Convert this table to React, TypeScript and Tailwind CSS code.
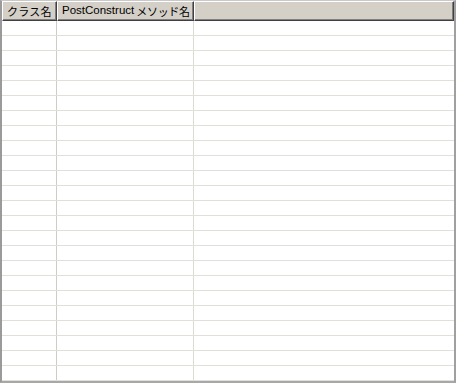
import React from "react";

const rows = Array.from({ length: 24 });

function HeaderCell({ w, children }: { w?: string; children?: React.ReactNode }) {
  return (
    <div
      className={`${w ?? "flex-1"} h-full shrink-0 border-t border-l border-t-white border-l-white border-r border-b border-r-[#404040] border-b-[#404040] shadow-[inset_-1px_-1px_0_#808080] flex items-center pl-[4px] overflow-hidden whitespace-nowrap`}
    >
      {children}
    </div>
  );
}

export default function App() {
  return (
    <div className="w-[456px] h-[385px] bg-white overflow-hidden">
      <div
        className="w-[456px] h-[383px] border-l-2 border-t border-r-2 border-b-2 border-l-[#9a9a9a] border-t-[#c8c8c8] border-r-[#a0a0a0] border-b-[#a8a8a8] flex flex-col overflow-hidden"
        style={{ fontFamily: '"Noto Sans CJK JP", "Liberation Sans", sans-serif' }}
      >
        <div className="flex h-[20px] shrink-0 bg-[#d4d0c8] leading-none text-black">
          <HeaderCell w="w-[55px]">
            <span className="text-[11px] tracking-[0.2px]">クラス名</span>
          </HeaderCell>
          <HeaderCell w="w-[137px]">
            <span className="text-[11.5px]" style={{ fontFamily: '"Liberation Sans", sans-serif' }}>PostConstruct</span>
            <span className="text-[11px] ml-[2px] tracking-[-0.3px]">メソッド名</span>
          </HeaderCell>
          <HeaderCell />
        </div>
        <div className="flex-1 overflow-hidden">
          {rows.map((_, i) => (
            <div key={i} className="flex h-[15px] border-b border-[#e2dfda]">
              <div className="w-[55px] shrink-0 border-r border-[#cfccc6]" />
              <div className="w-[137px] shrink-0 border-r border-[#dcdad5]" />
              <div className="flex-1" />
            </div>
          ))}
        </div>
      </div>
    </div>
  );
}
